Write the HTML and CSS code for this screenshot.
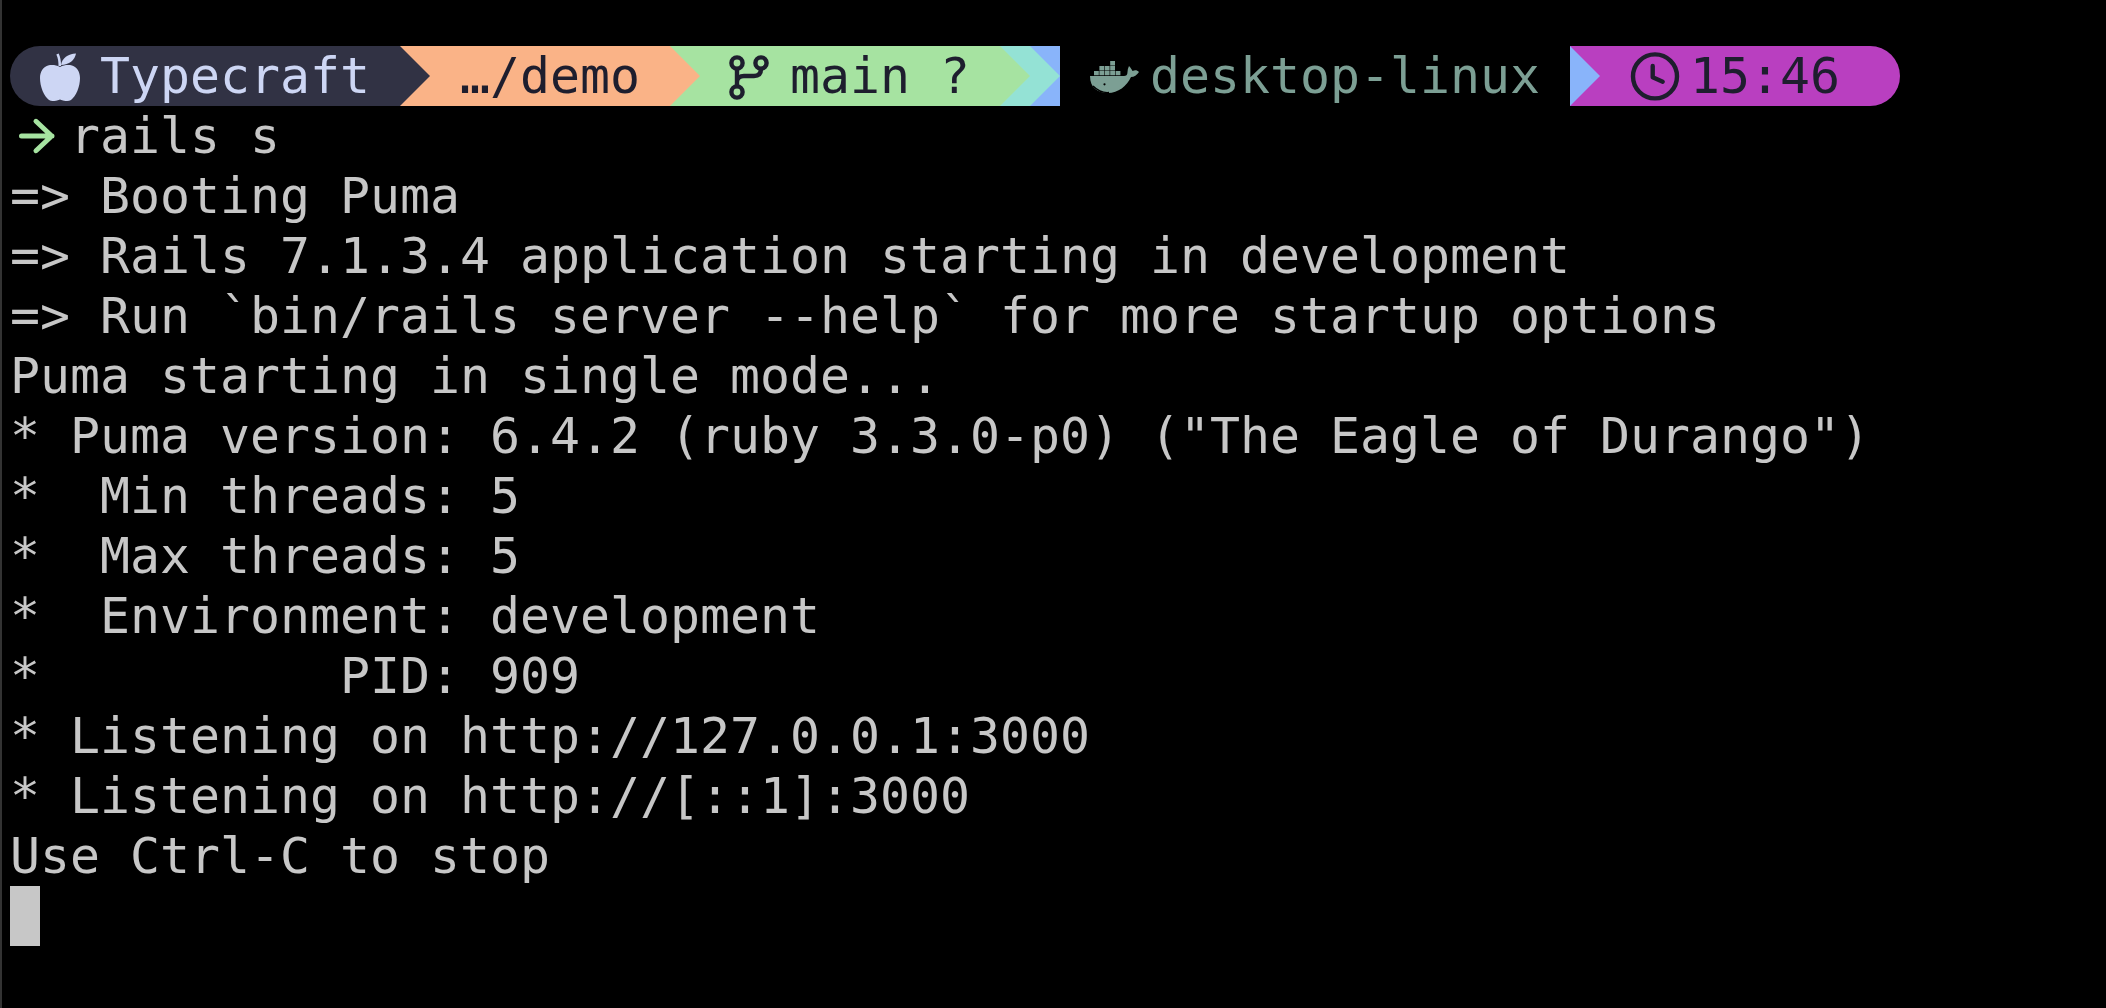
FILE: index.html
```html
<!DOCTYPE html>
<html lang="en">
<head>
<meta charset="utf-8">
<title>Terminal</title>
<link rel="stylesheet" href="styles.css">
</head>
<body>
<main class="term">
  <div class="prompt">
    <div class="seg seg-os">
      <svg class="icon" viewBox="0 0 60 60"><path class="fill-os" d="M20 21C16 19 12 18.5 8 19.5C3 21 0 26 0 32C0 41 4 50 9 54C12 56 15 55 20 53.5C25 55 28 56 31 54C36 50 40 41 40 32C40 26 37 21 32 19.5C28 18.5 24 19 20 21Z"/><path class="fill-os" d="M21 19C22 12 28 8 36 7.5C35 14 29 19 21 19Z"/><path class="stem" d="M17.5 8C19 11 19.8 15 19.8 20"/></svg>
      <span>Typecraft</span>
    </div>
    <svg class="chev bg-peach" viewBox="0 0 30 60"><path class="fill-dark" d="M0 0L30 30L0 60Z"/></svg>
    <div class="seg seg-dir"><span>…/demo</span></div>
    <svg class="chev bg-green" viewBox="0 0 30 60"><path class="fill-peach" d="M0 0L30 30L0 60Z"/></svg>
    <div class="seg seg-git">
      <svg class="icon" viewBox="0 0 60 60"><g class="line-dark"><circle cx="7" cy="17" r="5.6"/><circle cx="31" cy="17" r="5.6"/><circle cx="7" cy="46" r="5.6"/><path d="M7 23V40M31 23C31 28 28 30 24 30H14C10 30 7 32 7 36"/></g></svg>
      <span>main ?</span>
    </div>
    <svg class="chev bg-teal" viewBox="0 0 30 60"><path class="fill-green" d="M0 0L30 30L0 60Z"/></svg>
    <svg class="chev bg-blue" viewBox="0 0 30 60"><path class="fill-teal" d="M0 0L30 30L0 60Z"/></svg>
    <div class="seg seg-docker">
      <svg class="icon" viewBox="0 0 60 60">
        <path class="fill-docker" d="M0 30H34C36 30 37.5 29 37.5 26C37.5 24 38 22 39 20C41 22 42 24 42.5 25C45 24 47 24 49 26C47 29 44 31 41 31C37 40 28 47 18 47C8 47 0 42 0 30Z"/>
        <path class="fill-docker" d="M4 25H8.8V29.2H4ZM9.4 25H14.2V29.2H9.4ZM14.8 25H19.6V29.2H14.8ZM20.2 25H25V29.2H20.2ZM25.6 25H30.4V29.2H25.6ZM9.4 20H14.2V24.4H9.4ZM14.8 20H19.6V24.4H14.8ZM20.2 20H25V24.4H20.2ZM20.2 15H25V19.4H20.2Z"/>
        <path class="smile" d="M3 40C8 45 14 47 19 46.5"/>
        <circle class="eye" cx="14.5" cy="38.3" r="1.1"/>
      </svg>
      <span>desktop-linux</span>
    </div>
    <svg class="chev bg-purple" viewBox="0 0 30 60"><path class="fill-blue" d="M0 0L30 30L0 60Z"/></svg>
    <div class="seg seg-time">
      <svg class="icon" viewBox="0 0 60 60"><g class="line-dark"><circle cx="25" cy="30.4" r="22"/><path d="M22.7 20V31.3L32.7 35.7"/></g></svg>
      <span>15:46</span>
    </div>
  </div>
  <div class="cmd">
    <svg class="cmd-arrow" viewBox="0 0 60 60"><path d="M11.5 30H42M26 15.3L41.7 30L26 44.7"/></svg>
    <span>rails s</span>
  </div>
  <pre class="output">=&gt; Booting Puma
=&gt; Rails 7.1.3.4 application starting in development
=&gt; Run `bin/rails server --help` for more startup options
Puma starting in single mode...
* Puma version: 6.4.2 (ruby 3.3.0-p0) ("The Eagle of Durango")
*  Min threads: 5
*  Max threads: 5
*  Environment: development
*          PID: 909
* Listening on http://127.0.0.1:3000
* Listening on http://[::1]:3000
Use Ctrl-C to stop</pre>
  <div class="cursor"></div>
</main>
</body>
</html>
```

FILE: styles.css
```css
html, body {
  margin: 0;
  height: 100%;
  background: #000;
}

.term {
  box-sizing: border-box;
  height: 1008px;
  padding: 46px 0 0 8px;
  border-left: 2px solid #333;
  overflow: hidden;
  font-family: "DejaVu Sans Mono", "Liberation Mono", monospace;
  font-size: 49.83px;
  line-height: 60px;
  color: #c7c7c7;
}

.prompt {
  display: flex;
  height: 60px;
}

.seg {
  display: flex;
  align-items: center;
  box-sizing: border-box;
  height: 60px;
  padding-left: 30px;
  white-space: pre;
}

.icon {
  flex: none;
  width: 60px;
  height: 60px;
  overflow: visible;
}

.chev {
  flex: none;
  display: block;
  width: 30px;
  height: 60px;
}

.seg-os {
  width: 390px;
  background: #313244;
  color: #cdd6f4;
  border-radius: 30px 0 0 30px;
}

.seg-dir {
  width: 240px;
  background: #fab387;
  color: #1e1e2e;
}

.seg-git {
  width: 300px;
  background: #a6e3a1;
  color: #1e1e2e;
}

.seg-docker {
  width: 510px;
  color: #7c9f94;
}

.seg-time {
  width: 300px;
  background: #b93fc0;
  color: #1e1e2e;
  border-radius: 0 30px 30px 0;
}

.bg-peach { background: #fab387; }
.bg-green { background: #a6e3a1; }
.bg-teal { background: #94e2d5; }
.bg-blue { background: #89b4fa; }
.bg-purple { background: #b93fc0; }

.fill-os { fill: #cdd6f4; }
.fill-dark { fill: #313244; }
.fill-peach { fill: #fab387; }
.fill-green { fill: #a6e3a1; }
.fill-teal { fill: #94e2d5; }
.fill-blue { fill: #89b4fa; }
.fill-docker { fill: #7c9f94; }

.stem {
  fill: none;
  stroke: #cdd6f4;
  stroke-width: 2.6;
}

.smile {
  fill: none;
  stroke: #000;
  stroke-width: 1.4;
}

.eye {
  fill: #000;
}

.line-dark {
  fill: none;
  stroke: #1e1e2e;
  stroke-width: 4.4;
  stroke-linecap: round;
  stroke-linejoin: round;
}

.cmd {
  display: flex;
  height: 60px;
  white-space: pre;
}

.cmd-arrow {
  flex: none;
  width: 60px;
  height: 60px;
}

.cmd-arrow path {
  fill: none;
  stroke: #a6e3a1;
  stroke-width: 5;
  stroke-linecap: round;
  stroke-linejoin: round;
}

.output {
  margin: 0;
  font: inherit;
}

.cursor {
  width: 30px;
  height: 60px;
  background: #c7c7c7;
}
```
